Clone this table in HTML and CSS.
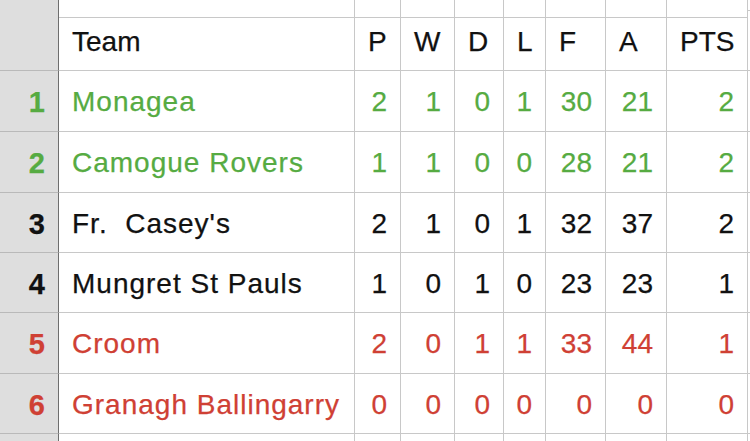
FILE: index.html
```html
<!DOCTYPE html>
<html>
<head>
<meta charset="utf-8">
<link rel="stylesheet" href="styles.css">
</head>
<body>
<div class="sheet">
  <div class="g"></div><div class="c"></div><div class="c"></div><div class="c"></div><div class="c"></div><div class="c"></div><div class="c"></div><div class="c"></div><div class="c"></div><div class="e"></div>

  <div class="g"></div><div class="c h">Team</div><div class="c h">P</div><div class="c h">W</div><div class="c h">D</div><div class="c h">L</div><div class="c h">F</div><div class="c h">A</div><div class="c h">PTS</div><div class="e"></div>

  <div class="g green">1</div><div class="c t green">Monagea</div><div class="c n green">2</div><div class="c n green">1</div><div class="c n green">0</div><div class="c n green">1</div><div class="c n green">30</div><div class="c n green">21</div><div class="c n green">2</div><div class="e"></div>

  <div class="g green">2</div><div class="c t green">Camogue Rovers</div><div class="c n green">1</div><div class="c n green">1</div><div class="c n green">0</div><div class="c n green">0</div><div class="c n green">28</div><div class="c n green">21</div><div class="c n green">2</div><div class="e"></div>

  <div class="g">3</div><div class="c t">Fr.&nbsp; Casey's</div><div class="c n">2</div><div class="c n">1</div><div class="c n">0</div><div class="c n">1</div><div class="c n">32</div><div class="c n">37</div><div class="c n">2</div><div class="e"></div>

  <div class="g">4</div><div class="c t">Mungret St Pauls</div><div class="c n">1</div><div class="c n">0</div><div class="c n">1</div><div class="c n">0</div><div class="c n">23</div><div class="c n">23</div><div class="c n">1</div><div class="e"></div>

  <div class="g red">5</div><div class="c t red">Croom</div><div class="c n red">2</div><div class="c n red">0</div><div class="c n red">1</div><div class="c n red">1</div><div class="c n red">33</div><div class="c n red">44</div><div class="c n red">1</div><div class="e"></div>

  <div class="g red">6</div><div class="c t red">Granagh Ballingarry</div><div class="c n red">0</div><div class="c n red">0</div><div class="c n red">0</div><div class="c n red">0</div><div class="c n red">0</div><div class="c n red">0</div><div class="c n red">0</div><div class="e"></div>

  <div class="g"></div><div class="c"></div><div class="c"></div><div class="c"></div><div class="c"></div><div class="c"></div><div class="c"></div><div class="c"></div><div class="c"></div><div class="e"></div>
</div>
</body>
</html>
```

FILE: styles.css
```css
html, body {
  margin: 0;
  padding: 0;
  background: #ffffff;
}

.sheet {
  width: 750px;
  height: 441px;
  overflow: hidden;
  display: grid;
  grid-template-columns: 59px 296px 46px 54px 49px 42px 60px 61px 81px 2px;
  grid-template-rows: 11px 60px 61px 61px 60px 60px 61px 60px 20px;
  font-family: "Liberation Sans", Arial, Helvetica, sans-serif;
  font-size: 28px;
  line-height: 28px;
  color: #111111;
  -webkit-text-stroke: 0.25px currentColor;
}

.sheet > div {
  box-sizing: border-box;
  white-space: nowrap;
  overflow: hidden;
}

.g {
  background: #dedede;
  border-right: 1px solid #6e6e6e;
  border-bottom: 1px solid #b9b9b9;
  font-weight: bold;
  font-size: 29px;
  text-align: right;
  padding: 17px 13px 0 0;
}

.c {
  border-right: 1px solid #c8c8c8;
  border-bottom: 1px solid #c8c8c8;
  padding-top: 17px;
}

.e {
  border-bottom: 1px solid #c8c8c8;
}

.h {
  text-align: left;
  padding-left: 13px;
}

.t {
  padding-left: 13px;
  letter-spacing: 1px;
}

.n {
  text-align: right;
  padding-right: 13px;
}

.green {
  color: #56ab42;
}

.red {
  color: #cf4034;
}
```
